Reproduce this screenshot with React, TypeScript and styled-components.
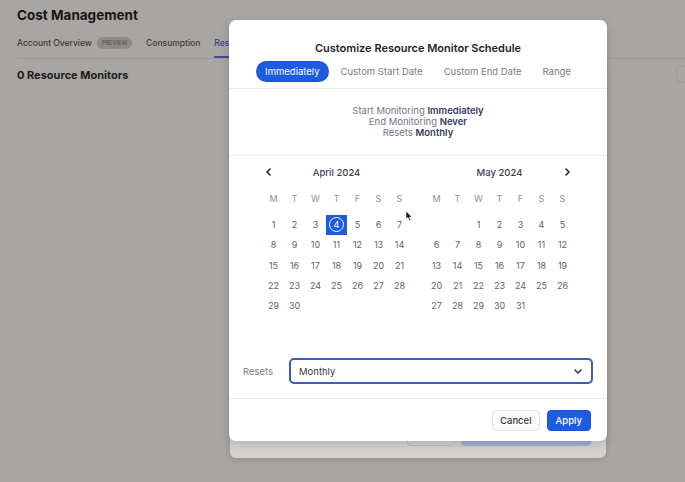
import React from "react";
import styled, { createGlobalStyle } from "styled-components";

const GlobalStyle = createGlobalStyle`
  html, body { margin: 0; padding: 0; }
  body {
    background: #a8a5a2;
    font-family: Inter, "Noto Sans", "Liberation Sans", sans-serif;
    width: 685px;
    height: 482px;
    overflow: hidden;
  }
`;

const Page = styled.div`
  position: relative;
  width: 685px;
  height: 482px;
  box-sizing: border-box;
  padding: 5px 0 0 17px;
`;

const PageTitle = styled.h1`
  margin: 0;
  font-size: 13.5px;
  line-height: 20px;
  font-weight: 700;
  color: #151515;
`;

const PageTabs = styled.nav`
  display: flex;
  align-items: center;
  gap: 14px;
  height: 28px;
  margin-top: 5px;
  border-bottom: 1px solid #9c9996;
`;

const PageTab = styled.span<{ $active?: boolean }>`
  display: flex;
  align-items: center;
  gap: 5px;
  height: 100%;
  font-size: 8.5px;
  font-weight: 500;
  color: ${(p) => (p.$active ? "#34428f" : "#3d3c3b")};
  border-bottom: ${(p) => (p.$active ? "2px solid #3d4c9a" : "2px solid transparent")};
  box-sizing: border-box;
`;

const Badge = styled.span`
  display: inline-flex;
  align-items: center;
  height: 12px;
  padding: 0 5px;
  border-radius: 6px;
  background: #8e8b88;
  color: #66635f;
  font-size: 5.5px;
  font-weight: 700;
`;

const SectionTitle = styled.h2`
  margin: 9px 0 0;
  font-size: 11px;
  line-height: 14px;
  font-weight: 700;
  color: #1c1c1c;
`;

const GhostButton = styled.div`
  position: absolute;
  left: 676px;
  top: 66px;
  width: 30px;
  height: 15px;
  border: 1px solid #9d9a97;
  border-radius: 4px;
`;

const BackDialog = styled.div`
  position: absolute;
  left: 230px;
  top: 60px;
  width: 376px;
  height: 398px;
  border-radius: 6px;
  background: #d4d2cf;
  box-shadow: 0 2px 6px rgba(0, 0, 0, 0.12);
  display: flex;
  align-items: flex-end;
  justify-content: flex-end;
  gap: 6px;
  padding: 0 15px 12px 0;
  box-sizing: border-box;
`;

const BackBtn = styled.div<{ $primary?: boolean }>`
  width: ${(p) => (p.$primary ? "130px" : "48px")};
  height: 22px;
  border-radius: 4px;
  border: 1px solid ${(p) => (p.$primary ? "#9fb0d4" : "#bcb9b6")};
  background: ${(p) => (p.$primary ? "#9fb0d4" : "transparent")};
  box-sizing: border-box;
`;

const Dialog = styled.div`
  position: absolute;
  left: 229px;
  top: 20px;
  width: 378px;
  height: 421px;
  background: #ffffff;
  border-radius: 7px;
  box-shadow: 0 3px 10px rgba(0, 0, 0, 0.16);
  display: flex;
  flex-direction: column;
  overflow: hidden;
`;

const DialogHeader = styled.div`
  display: flex;
  flex-direction: column;
  align-items: center;
  padding: 20px 0 7px;
  border-bottom: 1px solid #ececef;
`;

const DialogTitle = styled.h3`
  margin: 0;
  font-size: 11px;
  line-height: 16px;
  font-weight: 600;
  color: #1e1f24;
`;

const Segments = styled.div`
  display: flex;
  gap: 5px;
  margin-top: 6px;
`;

const Segment = styled.button<{ $active?: boolean }>`
  height: 19px;
  padding: 0 8px;
  border: none;
  border-radius: 10px;
  font-family: inherit;
  font-size: 9.5px;
  background: ${(p) => (p.$active ? "#1d5be3" : "transparent")};
  color: ${(p) => (p.$active ? "#ffffff" : "#7a7d88")};
  box-shadow: ${(p) => (p.$active ? "0 0 0 1px #1a4fc7" : "none")};
`;

const Summary = styled.div`
  padding: 16px 0 17px;
  text-align: center;
  font-size: 9.5px;
  line-height: 11px;
  color: #727585;
  border-bottom: 1px solid #ececef;

  b {
    color: #343a5c;
    font-weight: 600;
  }
`;

const Calendars = styled.div`
  display: flex;
  gap: 16px;
  padding: 8px 34px 0;
  flex: 1;
`;

const Month = styled.div`
  width: 147px;
  display: flex;
  flex-direction: column;
`;

const MonthHeader = styled.div`
  display: grid;
  grid-template-columns: 21px 1fr 21px;
  align-items: center;
  height: 16px;
  font-size: 9.5px;
  font-weight: 500;
  color: #3b3f55;
  text-align: center;
`;

const Arrow = styled.span<{ $right?: boolean }>`
  display: flex;
  justify-content: ${(p) => (p.$right ? "flex-end" : "flex-start")};
  padding: 0 1px;
  color: #1f2230;
`;

const DayGrid = styled.div<{ $header?: boolean }>`
  display: grid;
  grid-template-columns: repeat(7, 21px);
  grid-auto-rows: 20.3px;
  align-items: center;
  justify-items: center;
  font-size: 9px;
  color: ${(p) => (p.$header ? "#8d8f99" : "#606270")};
  margin-top: ${(p) => (p.$header ? "8.5px" : "5.7px")};
`;

const Day = styled.span<{ $selected?: boolean }>`
  width: 21px;
  height: 20px;
  display: flex;
  align-items: center;
  justify-content: center;
  background: ${(p) => (p.$selected ? "#1d5be3" : "transparent")};
  color: ${(p) => (p.$selected ? "#fff" : "inherit")};
`;

const Ring = styled.span`
  width: 15px;
  height: 15px;
  border: 1.4px solid #fff;
  border-radius: 50%;
  display: flex;
  align-items: center;
  justify-content: center;
  box-sizing: border-box;
`;

const ResetsRow = styled.div`
  display: flex;
  align-items: center;
  padding: 0 14px 14px;
  border-bottom: 1px solid #ececef;
`;

const Label = styled.span`
  width: 46px;
  font-size: 9.5px;
  color: #7b7d86;
`;

const Select = styled.div`
  flex: 1;
  height: 26px;
  box-sizing: border-box;
  border: 2px solid #3d5bc1;
  border-radius: 5px;
  display: flex;
  align-items: center;
  justify-content: space-between;
  padding: 0 8px;
  font-size: 9.5px;
  color: #34374a;
`;

const Footer = styled.div`
  display: flex;
  justify-content: flex-end;
  gap: 7px;
  padding: 11px 16px 10px;
`;

const FooterButton = styled.button<{ $primary?: boolean }>`
  height: 21px;
  padding: 0 ${(p) => (p.$primary ? "8px" : "7px")};
  border-radius: 4px;
  font-family: inherit;
  font-size: 9.5px;
  font-weight: 500;
  border: 1px solid ${(p) => (p.$primary ? "#1a53d9" : "#e4e4e8")};
  background: ${(p) => (p.$primary ? "#1d5be3" : "#fafafb")};
  color: ${(p) => (p.$primary ? "#ffffff" : "#3a3c48")};
`;

const Cursor = styled.svg`
  position: absolute;
  left: 405px;
  top: 210px;
`;

const Chevron = ({ dir }: { dir: "left" | "right" | "down" }) => {
  const d =
    dir === "left" ? "M6 2 L3 5 L6 8" : dir === "right" ? "M4 2 L7 5 L4 8" : "M2 4 L5 7 L8 4";
  return (
    <svg width="10" height="10" viewBox="0 0 10 10">
      <path d={d} fill="none" stroke="currentColor" strokeWidth="1.6" strokeLinecap="round" strokeLinejoin="round" />
    </svg>
  );
};

const weekdays = ["M", "T", "W", "T", "F", "S", "S"];

function buildDays(offset: number, count: number) {
  const cells: (number | null)[] = [];
  for (let i = 0; i < offset; i++) cells.push(null);
  for (let d = 1; d <= count; d++) cells.push(d);
  return cells;
}

const MonthView = ({
  title,
  offset,
  count,
  selected,
  prev,
  next,
}: {
  title: string;
  offset: number;
  count: number;
  selected?: number;
  prev?: boolean;
  next?: boolean;
}) => (
  <Month>
    <MonthHeader>
      <Arrow>{prev && <Chevron dir="left" />}</Arrow>
      <span>{title}</span>
      <Arrow $right>{next && <Chevron dir="right" />}</Arrow>
    </MonthHeader>
    <DayGrid $header>
      {weekdays.map((w, i) => (
        <span key={i}>{w}</span>
      ))}
    </DayGrid>
    <DayGrid>
      {buildDays(offset, count).map((d, i) =>
        d === null ? (
          <Day key={i} />
        ) : d === selected ? (
          <Day key={i} $selected>
            <Ring>{d}</Ring>
          </Day>
        ) : (
          <Day key={i}>{d}</Day>
        )
      )}
    </DayGrid>
  </Month>
);

export default function App() {
  return (
    <>
      <GlobalStyle />
      <Page>
        <PageTitle>Cost Management</PageTitle>
        <PageTabs>
          <PageTab>
            Account Overview <Badge>PREVIEW</Badge>
          </PageTab>
          <PageTab>Consumption</PageTab>
          <PageTab $active>Resource Monitors</PageTab>
        </PageTabs>
        <SectionTitle>0 Resource Monitors</SectionTitle>
        <GhostButton />
        <BackDialog>
          <BackBtn />
          <BackBtn $primary />
        </BackDialog>
        <Dialog>
          <DialogHeader>
            <DialogTitle>Customize Resource Monitor Schedule</DialogTitle>
            <Segments>
              <Segment $active>Immediately</Segment>
              <Segment>Custom Start Date</Segment>
              <Segment>Custom End Date</Segment>
              <Segment>Range</Segment>
            </Segments>
          </DialogHeader>
          <Summary>
            <div>
              Start Monitoring <b>Immediately</b>
            </div>
            <div>
              End Monitoring <b>Never</b>
            </div>
            <div>
              Resets <b>Monthly</b>
            </div>
          </Summary>
          <Calendars>
            <MonthView title="April 2024" offset={0} count={30} selected={4} prev />
            <MonthView title="May 2024" offset={2} count={31} next />
          </Calendars>
          <ResetsRow>
            <Label>Resets</Label>
            <Select>
              <span>Monthly</span>
              <Chevron dir="down" />
            </Select>
          </ResetsRow>
          <Footer>
            <FooterButton>Cancel</FooterButton>
            <FooterButton $primary>Apply</FooterButton>
          </Footer>
        </Dialog>
        <Cursor width="8" height="12" viewBox="0 0 8 12">
          <path d="M1 1 L1 9 L3 7.5 L4.5 11 L5.8 10.4 L4.4 7 L7 7 Z" fill="#111" stroke="#fff" strokeWidth="0.7" />
        </Cursor>
      </Page>
    </>
  );
}
